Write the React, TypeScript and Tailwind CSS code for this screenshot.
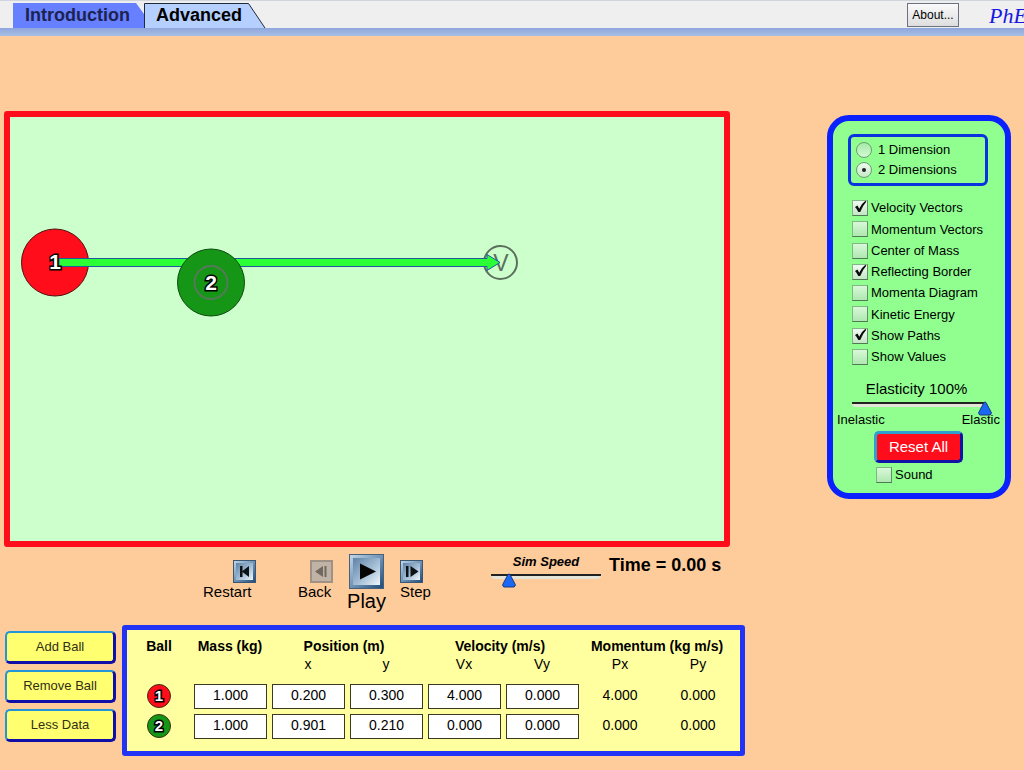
import { useState } from "react";

const options = [
  { label: "Velocity Vectors", on: true },
  { label: "Momentum Vectors", on: false },
  { label: "Center of Mass", on: false },
  { label: "Reflecting Border", on: true },
  { label: "Momenta Diagram", on: false },
  { label: "Kinetic Energy", on: false },
  { label: "Show Paths", on: true },
  { label: "Show Values", on: false },
];

const balls = [
  { id: 1, color: "#ff0d1a", values: ["1.000", "0.200", "0.300", "4.000", "0.000"], momentum: ["4.000", "0.000"] },
  { id: 2, color: "#169616", values: ["1.000", "0.901", "0.210", "0.000", "0.000"], momentum: ["0.000", "0.000"] },
];

const fields = ["mass", "x position", "y position", "x velocity", "y velocity"];

function Header() {
  return (
    <header className="overflow-hidden">
      <div className="flex h-7 items-end border-t border-gray-300 bg-[#efefef] pl-[13px]">
        <nav className="flex">
          <button className="relative h-[25px] w-[131px] text-lg leading-[25px] font-bold text-[#1c2352]">
            <svg className="absolute inset-0" width="131" height="25" viewBox="0 0 131 25" aria-hidden="true">
              <path d="M0 0H123L131 11V25H0Z" fill="#6680ff" />
            </svg>
            <span className="relative block pr-[2px]">Introduction</span>
          </button>
          <button className="relative h-[25px] w-[122px] text-lg leading-[25px] font-bold text-black">
            <svg className="absolute inset-0" width="122" height="25" viewBox="0 0 122 25" aria-hidden="true">
              <path d="M.5 25V.5H104.500L121 25" fill="#b5cfff" stroke="#1f2a3c" />
            </svg>
            <span className="relative block pr-3">Advanced</span>
          </button>
        </nav>
        <button className="mr-[30px] mb-px ml-auto h-6 w-[52px] border border-gray-500 bg-linear-to-b from-[#fafafa] to-[#dedede] text-xs text-black">
          About...
        </button>
        <span className="w-[35px] overflow-hidden font-['Liberation_Serif',serif] text-[22px] leading-6 text-[#1717e0] italic">
          PhE
        </span>
      </div>
      <div className="h-2 bg-linear-to-b from-[#8ea6dc] to-[#a9bfe6]" />
    </header>
  );
}

function Arena() {
  return (
    <div className="rounded-[3px] border-6 border-[#ff0d1a] bg-[#ccffcc]">
      <svg
        className="block h-auto w-full font-['Liberation_Sans',sans-serif] font-bold"
        viewBox="0 0 714 424"
        role="img"
        aria-label="Two balls on the table"
      >
        <circle cx="45" cy="145.500" r="33.500" fill="#ff0d1a" stroke="#501010" />
        <circle cx="490.500" cy="145.500" r="16.500" fill="none" stroke="#5c6f5c" strokeWidth="2" />
        <text x="491" y="153.500" fontSize="23" fontWeight="400" textAnchor="middle" fill="#5c6f5c">
          V
        </text>
        <path
          d="M49 141.500H477V137.500L490 145.500L477 153.500V149.500H49Z"
          fill="#2bff36"
          stroke="#1f5aa0"
        />
        <text x="45" y="152" fontSize="21" textAnchor="middle" fill="#fff" stroke="#000" strokeWidth="3" paintOrder="stroke">
          1
        </text>
        <circle cx="201" cy="165.500" r="33.500" fill="#169616" stroke="#0b4a0b" />
        <circle cx="201" cy="165.500" r="16.500" fill="none" stroke="#56795a" strokeWidth="2" />
        <text x="201" y="172.500" fontSize="21" textAnchor="middle" fill="#fff" stroke="#000" strokeWidth="3" paintOrder="stroke">
          2
        </text>
      </svg>
    </div>
  );
}

function Slider({ label, start }: { label: string; start: number }) {
  const [value, setValue] = useState(start);
  return (
    <div className="relative h-4 w-full">
      <div className="h-[5px] rounded-b-sm border-t-2 border-[#222] bg-[#e4e4d8]" />
      <svg
        className="absolute -top-px -ml-[7px]"
        style={{ left: `${value}%` }}
        width="14"
        height="15"
        viewBox="0 0 14 15"
        aria-hidden="true"
      >
        <path d="M6 1.500Q7 .5 8 1.500L13.300 11.500Q13.500 13.500 12 14H2Q.5 13.500 .7 11.500Z" fill="#1c68f5" stroke="#17387c" />
      </svg>
      <input
        type="range"
        aria-label={label}
        value={value}
        onChange={(e) => setValue(Number(e.target.value))}
        className="absolute inset-0 w-full cursor-pointer opacity-0"
      />
    </div>
  );
}

function Check({ label, on }: { label: string; on: boolean }) {
  return (
    <label className="relative flex h-5 items-center gap-[3px]">
      <input
        type="checkbox"
        defaultChecked={on}
        className="peer size-4 shrink-0 appearance-none border border-t-[#7fb884] border-r-[#5f8f62] border-b-[#4d7a50] border-l-[#7fb884] bg-linear-to-b from-[#d8f8d8] to-[#aee8b0] checked:from-[#f2fbf2] checked:to-[#c4e6c6]"
      />
      <svg
        className="pointer-events-none absolute top-[2px] left-[2px] hidden peer-checked:block"
        width="13"
        height="14"
        viewBox="0 0 13 14"
        aria-hidden="true"
      >
        <path d="M1 7L3.500 5.500L5.200 8.800Q7.500 3.500 11.500 .8L12.300 1.800Q8.500 6 6.200 12H4.300Q3 9 1 7Z" fill="#0a0a0a" />
      </svg>
      {label}
    </label>
  );
}

function Dimension({ label, on }: { label: string; on?: boolean }) {
  return (
    <label className="relative flex h-5 items-center gap-[6px]">
      <input
        type="radio"
        name="dimension"
        defaultChecked={on}
        className="peer size-4 appearance-none rounded-full border border-[#6c9c70] bg-linear-to-b from-[#a5eba8] to-[#d4f8d4] checked:from-[#eefaee] checked:to-[#c6eac8]"
      />
      <span className="pointer-events-none absolute left-[6px] hidden size-1 rounded-full bg-[#222] peer-checked:block" />
      {label}
    </label>
  );
}

function ControlPanel() {
  return (
    <aside className="mt-1 flex w-[184px] shrink-0 flex-col rounded-[22px] border-6 border-[#0b22ff] bg-[#90ff90] pt-[13px] pb-2 text-[13px]">
      <fieldset className="mr-[17px] ml-[15px] rounded-md border-[3px] border-[#0b32e0] px-[5px] py-[3px]">
        <Dimension label="1 Dimension" />
        <Dimension label="2 Dimensions" on />
      </fieldset>
      <div className="mt-3 flex h-[169px] flex-col justify-between pl-[19px]">
        {options.map((o) => (
          <Check key={o.label} label={o.label} on={o.on} />
        ))}
      </div>
      <p className="mt-3 pr-[5px] text-center text-[15px] leading-5">Elasticity 100%</p>
      <div className="mt-[3px] mr-[20px] ml-[19px]">
        <Slider label="Elasticity" start={100} />
      </div>
      <div className="-mt-[6px] flex justify-between pr-[5px] pl-1 leading-4">
        <span>Inelastic</span>
        <span>Elastic</span>
      </div>
      <button className="mt-[3px] ml-[41px] h-8 w-[89px] rounded-[5px] border-[3px] border-t-[#2f9fd0] border-r-[#1212a8] border-b-[#1212a8] border-l-[#2f9fd0] bg-[#ff0d1a] text-[15px] leading-5 text-white">
        Reset All
      </button>
      <div className="mt-[2px] pl-[43px]">
        <Check label="Sound" on={false} />
      </div>
    </aside>
  );
}

function Playback() {
  return (
    <div className="flex h-[78px] items-start pt-[7px] pl-[199px] text-[15px] leading-[18px]">
      <button className="mt-[6px] flex w-[53px] flex-col text-left">
        <svg className="self-end" width="23" height="23" viewBox="0 0 23 23" aria-hidden="true">
          <rect x=".5" y=".5" width="22" height="22" fill="url(#bevel)" stroke="#3b5670" />
          <rect x="3" y="3" width="17" height="17" fill="url(#steel)" />
          <path d="M7 6H9.500V11L16 6V17L9.500 12V17H7Z" fill="#0c1216" />
        </svg>
        Restart
      </button>
      <button className="mt-[6px] ml-[42px] flex w-[35px] flex-col text-left">
        <svg className="self-end" width="23" height="23" viewBox="0 0 23 23" aria-hidden="true">
          <rect x="1" y="1" width="21" height="21" fill="#c0b3a6" stroke="#9f9285" strokeWidth="2" />
          <path d="M5 11.500L13 6V17ZM14.500 6H16.500V17H14.500Z" fill="#716860" />
        </svg>
        Back
      </button>
      <button className="ml-[14px] flex w-[39px] flex-col items-center text-xl leading-6">
        <svg width="35" height="35" viewBox="0 0 35 35" aria-hidden="true">
          <defs>
            <linearGradient id="steel" x1="0" y1="0" x2="1" y2="1">
              <stop offset="0" stopColor="#5f82a6" />
              <stop offset=".55" stopColor="#a4bed6" />
              <stop offset="1" stopColor="#f0f6fa" />
            </linearGradient>
            <linearGradient id="bevel" x1="0" y1="0" x2="1" y2="1">
              <stop offset="0" stopColor="#c4d8ea" />
              <stop offset=".5" stopColor="#6f93b6" />
              <stop offset="1" stopColor="#1d4a78" />
            </linearGradient>
          </defs>
          <rect x=".5" y=".5" width="34" height="34" fill="url(#bevel)" stroke="#4a6076" />
          <rect x="4" y="4" width="27" height="27" fill="url(#steel)" />
          <path d="M11 9.500L27 17.500L11 25.500Z" fill="#050505" />
        </svg>
        Play
      </button>
      <button className="mt-[6px] ml-[14px] flex w-[33px] flex-col text-left">
        <svg width="23" height="23" viewBox="0 0 23 23" aria-hidden="true">
          <rect x=".5" y=".5" width="22" height="22" fill="url(#bevel)" stroke="#3b5670" />
          <rect x="3" y="3" width="17" height="17" fill="url(#steel)" />
          <path d="M6 6H8.500V17H6ZM10.500 6L18.500 11.500L10.500 17Z" fill="#0c1216" />
        </svg>
        Step
      </button>
      <div className="ml-[58px] w-[110px] shrink-0 text-center text-[13px] leading-4 font-bold italic">
        <p className="mb-1">Sim Speed</p>
        <Slider label="Sim speed" start={16} />
      </div>
      <p className="ml-2 text-lg leading-[22px] font-bold whitespace-nowrap">Time = 0.00 s</p>
    </div>
  );
}

function BallButtons() {
  return (
    <div className="mt-[6px] flex w-[112px] flex-col gap-[6px] pl-px">
      {["Add Ball", "Remove Ball", "Less Data"].map((name) => (
        <button
          key={name}
          className="h-[33px] rounded-[5px] border-2 border-r-[3px] border-b-[3px] border-t-[#2496d8] border-r-[#1010a8] border-b-[#1010a8] border-l-[#2496d8] bg-[#ffff70] pb-px text-[13px] text-[#303018]"
        >
          {name}
        </button>
      ))}
    </div>
  );
}

function DataTable() {
  return (
    <div className="rounded-[3px] border-[5px] border-[#2233f5] bg-[#ffffa0] pt-[7px] pr-[3px] pb-[10px]">
      <table className="w-[610px] table-fixed text-center text-sm leading-[18px]">
        <colgroup>
          <col className="w-16" />
          <col span={7} className="w-[78px]" />
        </colgroup>
        <thead>
          <tr>
            <th scope="col">Ball</th>
            <th scope="col">Mass (kg)</th>
            <th scope="colgroup" colSpan={2} className="pr-[6px]">Position (m)</th>
            <th scope="colgroup" colSpan={2} className="pr-[6px]">Velocity (m/s)</th>
            <th scope="colgroup" colSpan={2} className="pr-1 whitespace-nowrap">Momentum (kg m/s)</th>
          </tr>
          <tr>
            <td className="h-[26px]" />
            <td />
            {["x", "y", "Vx", "Vy", "Px", "Py"].map((h) => (
              <th key={h} scope="col" className="pb-2 font-normal">{h}</th>
            ))}
          </tr>
        </thead>
        <tbody>
          {balls.map((ball) => (
            <tr key={ball.id} className="h-[30px]">
              <td>
                <svg className="mx-auto block font-bold" width="24" height="24" viewBox="0 0 24 24">
                  <circle cx="12" cy="12" r="11.500" fill={ball.color} stroke="#3a3010" />
                  <text x="12" y="17" fontSize="15" textAnchor="middle" fill="#fff" stroke="#000" strokeWidth="3" paintOrder="stroke">
                    {ball.id}
                  </text>
                </svg>
              </td>
              {ball.values.map((value, i) => (
                <td key={fields[i]} className="pr-[2px] pl-[3px]">
                  <input
                    type="text"
                    aria-label={`Ball ${ball.id} ${fields[i]}`}
                    defaultValue={value}
                    className="block h-[25px] w-full border border-[#3a3a20] bg-white pb-[3px] text-center"
                  />
                </td>
              ))}
              {ball.momentum.map((value, i) => (
                <td key={i} className="pb-[3px]">{value}</td>
              ))}
            </tr>
          ))}
        </tbody>
      </table>
    </div>
  );
}

export default function App() {
  return (
    <div className="min-h-screen bg-[#fecb9b] font-['Liberation_Sans',Arial,sans-serif] text-black">
      <Header />
      <main className="flex items-start pt-[75px] pr-[13px] pl-1">
        <div className="min-w-0 flex-1">
          <div className="mr-[97px]">
            <Arena />
            <Playback />
          </div>
          <div className="flex items-start gap-[6px]">
            <BallButtons />
            <DataTable />
          </div>
        </div>
        <ControlPanel />
      </main>
    </div>
  );
}
